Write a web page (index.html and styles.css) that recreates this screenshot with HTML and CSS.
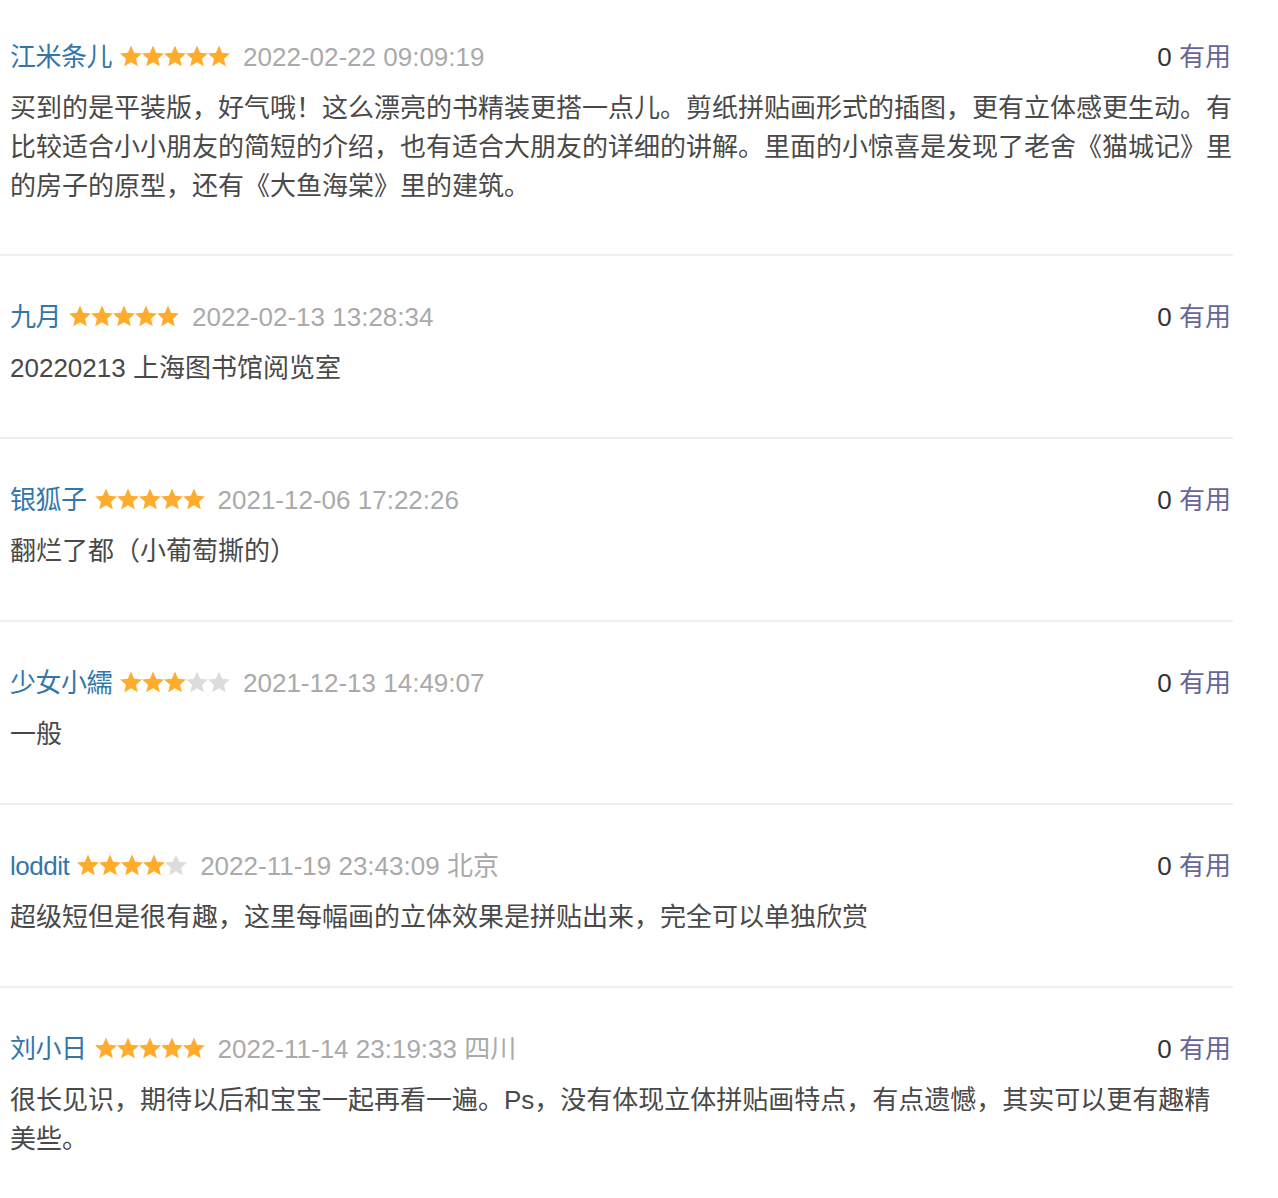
FILE: index.html
```html
<!DOCTYPE html>
<html lang="zh-CN">
<head>
<meta charset="utf-8">
<title>短评</title>
<link rel="stylesheet" href="styles.css">
</head>
<body>
<svg class="defs" width="0" height="0" aria-hidden="true">
  <defs>
    <polygon id="star" points="11,0.5 14.12,7.71 21.94,8.45 16.04,13.64 17.76,21.3 11,17.3 4.24,21.3 5.96,13.64 0.06,8.45 7.88,7.71"/>
  </defs>
</svg>
<ul class="comments">
  <li class="item">
    <div class="head">
      <div class="info">
        <a class="name">江米条儿</a>
        <svg class="stars" viewBox="0 0 110 22" width="110" height="22"><use href="#star" x="0" class="on"/><use href="#star" x="22" class="on"/><use href="#star" x="44" class="on"/><use href="#star" x="66" class="on"/><use href="#star" x="88" class="on"/></svg>
        <span class="time">2022-02-22 09:09:19</span>
      </div>
      <div class="vote"><span class="count">0</span> <a class="useful">有用</a></div>
    </div>
    <p class="text">买到的是平装版，好气哦！这么漂亮的书精装更搭一点儿。剪纸拼贴画形式的插图，更有立体感更生动。有比较适合小小朋友的简短的介绍，也有适合大朋友的详细的讲解。里面的小惊喜是发现了老舍《猫城记》里的房子的原型，还有《大鱼海棠》里的建筑。</p>
  </li>
  <li class="item">
    <div class="head">
      <div class="info">
        <a class="name">九月</a>
        <svg class="stars" viewBox="0 0 110 22" width="110" height="22"><use href="#star" x="0" class="on"/><use href="#star" x="22" class="on"/><use href="#star" x="44" class="on"/><use href="#star" x="66" class="on"/><use href="#star" x="88" class="on"/></svg>
        <span class="time">2022-02-13 13:28:34</span>
      </div>
      <div class="vote"><span class="count">0</span> <a class="useful">有用</a></div>
    </div>
    <p class="text">20220213 上海图书馆阅览室</p>
  </li>
  <li class="item">
    <div class="head">
      <div class="info">
        <a class="name">银狐子</a>
        <svg class="stars" viewBox="0 0 110 22" width="110" height="22"><use href="#star" x="0" class="on"/><use href="#star" x="22" class="on"/><use href="#star" x="44" class="on"/><use href="#star" x="66" class="on"/><use href="#star" x="88" class="on"/></svg>
        <span class="time">2021-12-06 17:22:26</span>
      </div>
      <div class="vote"><span class="count">0</span> <a class="useful">有用</a></div>
    </div>
    <p class="text">翻烂了都（小葡萄撕的）</p>
  </li>
  <li class="item">
    <div class="head">
      <div class="info">
        <a class="name">少女小繻</a>
        <svg class="stars" viewBox="0 0 110 22" width="110" height="22"><use href="#star" x="0" class="on"/><use href="#star" x="22" class="on"/><use href="#star" x="44" class="on"/><use href="#star" x="66" class="off"/><use href="#star" x="88" class="off"/></svg>
        <span class="time">2021-12-13 14:49:07</span>
      </div>
      <div class="vote"><span class="count">0</span> <a class="useful">有用</a></div>
    </div>
    <p class="text">一般</p>
  </li>
  <li class="item">
    <div class="head">
      <div class="info">
        <a class="name">loddit</a>
        <svg class="stars" viewBox="0 0 110 22" width="110" height="22"><use href="#star" x="0" class="on"/><use href="#star" x="22" class="on"/><use href="#star" x="44" class="on"/><use href="#star" x="66" class="on"/><use href="#star" x="88" class="off"/></svg>
        <span class="time">2022-11-19 23:43:09 北京</span>
      </div>
      <div class="vote"><span class="count">0</span> <a class="useful">有用</a></div>
    </div>
    <p class="text">超级短但是很有趣，这里每幅画的立体效果是拼贴出来，完全可以单独欣赏</p>
  </li>
  <li class="item">
    <div class="head">
      <div class="info">
        <a class="name">刘小日</a>
        <svg class="stars" viewBox="0 0 110 22" width="110" height="22"><use href="#star" x="0" class="on"/><use href="#star" x="22" class="on"/><use href="#star" x="44" class="on"/><use href="#star" x="66" class="on"/><use href="#star" x="88" class="on"/></svg>
        <span class="time">2022-11-14 23:19:33 四川</span>
      </div>
      <div class="vote"><span class="count">0</span> <a class="useful">有用</a></div>
    </div>
    <p class="text">很长见识，期待以后和宝宝一起再看一遍。Ps，没有体现立体拼贴画特点，有点遗憾，其实可以更有趣精美些。</p>
  </li>
</ul>
</body>
</html>
```

FILE: styles.css
```css
html, body {
  margin: 0;
  padding: 0;
  background: #fff;
}

body {
  font-family: "Liberation Sans", "Noto Sans CJK SC", sans-serif;
  font-size: 26px;
  color: #494949;
}

.defs {
  position: absolute;
  width: 0;
  height: 0;
  overflow: hidden;
}

.comments {
  list-style: none;
  margin: 0;
  padding: 0;
  width: 1233px;
}

.item {
  padding: 41px 0 49px 10px;
  border-bottom: 2px solid #efefef;
}

.item:first-child {
  padding-top: 37px;
  padding-bottom: 48px;
}

.head {
  display: flex;
  justify-content: space-between;
  align-items: center;
  height: 40px;
  line-height: 40px;
}

.info {
  display: flex;
  align-items: center;
}

.name {
  color: #3377aa;
  text-decoration: none;
  letter-spacing: -0.5px;
}

.stars {
  display: block;
  margin: 0 13px 0 8px;
  position: relative;
  top: -1px;
}

.stars .on {
  fill: #ffac2d;
}

.stars .off {
  fill: #dcdcdc;
}

.time {
  color: #aaaaaa;
}

.vote {
  white-space: pre;
  margin-right: 2px;
}

.count {
  color: #333;
}

.useful {
  color: #666699;
  text-decoration: none;
}

.text {
  margin: 12px 0 0;
  line-height: 39px;
  color: #494949;
  word-break: break-all;
}
```
